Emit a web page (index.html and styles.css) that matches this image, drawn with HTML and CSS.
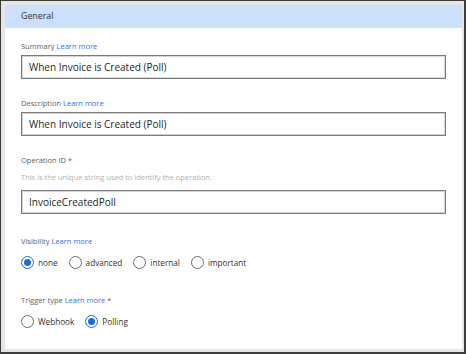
FILE: index.html
```html
<!DOCTYPE html>
<html lang="en">

<head>
    <meta charset="UTF-8">
    <title>General</title>
    <link rel="stylesheet" href="styles.css">
</head>

<body>
    <div class="frame">
        <div class="panel">
            <div class="panel-header">General</div>

            <div class="panel-body">
                <div class="field">
                    <div class="field-label">Summary <a class="learn">Learn more</a></div>
                    <div class="text-input">When Invoice is Created (Poll)</div>
                </div>

                <div class="field">
                    <div class="field-label">Description <a class="learn">Learn more</a></div>
                    <div class="text-input">When Invoice is Created (Poll)</div>
                </div>

                <div class="field">
                    <div class="field-label">Operation ID <span class="req">*</span></div>
                    <div class="hint">This is the unique string used to identify the operation.</div>
                    <div class="text-input">InvoiceCreatedPoll</div>
                </div>

                <div class="field field-choice">
                    <div class="field-label">Visibility <a class="learn">Learn more</a></div>
                    <div class="radio-row">
                        <span class="radio checked"></span><span class="radio-text">none</span>
                        <span class="radio"></span><span class="radio-text">advanced</span>
                        <span class="radio"></span><span class="radio-text">internal</span>
                        <span class="radio"></span><span class="radio-text">important</span>
                    </div>
                </div>

                <div class="field field-choice">
                    <div class="field-label">Trigger type <a class="learn">Learn more</a> <span class="req">*</span></div>
                    <div class="radio-row">
                        <span class="radio"></span><span class="radio-text">Webhook</span>
                        <span class="radio checked"></span><span class="radio-text">Polling</span>
                    </div>
                </div>
            </div>
        </div>
    </div>
</body>

</html>
```

FILE: styles.css
```css
html,
body {
    margin: 0;
    padding: 0;
}

body {
    font-family: "Open Sans", "Noto Sans", Arial, sans-serif;
    background-color: #fff;
}

.frame {
    box-sizing: border-box;
    width: 466px;
    height: 354px;
    border-left: 1px solid #3c3c3c;
    border-top: 1px solid #3c3c3c;
    border-right: 2px solid #3c3c3c;
    border-bottom: 2px solid #3c3c3c;
    background-color: #e6e6e6;
    padding: 4px 2px 3px 4px;
}

.panel {
    height: 100%;
    background-color: #fff;
}

.panel-header {
    height: 23px;
    line-height: 23px;
    padding-left: 16px;
    background-color: #cde0fb;
    color: #323130;
    font-size: 8.8px;
}

.panel-body {
    padding: 12px 16px 0 16px;
}

.field {
    margin-bottom: 18px;
}

.field-label {
    font-size: 7.5px;
    line-height: 12px;
    color: #605e5c;
    margin-bottom: 3px;
}

.learn {
    color: #2f72dc;
}

.req {
    color: #c4314b;
}

.hint {
    font-size: 7.5px;
    line-height: 12px;
    color: #b3b0ad;
    margin-top: 5px;
    margin-bottom: 7px;
}

.text-input {
    box-sizing: border-box;
    height: 24px;
    line-height: 22px;
    border: 1px solid #7a7a7a;
    box-shadow: inset 0 0 0 1px #d6d6d6;
    padding-left: 7px;
    font-size: 10px;
    color: #201f1e;
}

.field-choice {
    margin-bottom: 0;
    padding-top: 3px;
}

.field-choice .field-label {
    margin-bottom: 7px;
}

.field-choice + .field-choice {
    margin-top: 21px;
}

.radio-row {
    display: flex;
    align-items: center;
    height: 16px;
}

.radio {
    box-sizing: border-box;
    width: 13px;
    height: 13px;
    border: 1px solid #6b6b6b;
    border-radius: 50%;
    display: flex;
    align-items: center;
    justify-content: center;
}

.radio.checked {
    border-color: #1a6ae0;
}

.radio.checked::after {
    content: "";
    width: 7px;
    height: 7px;
    border-radius: 50%;
    background-color: #1a6ae0;
}

.radio-text {
    font-size: 8.2px;
    color: #323130;
    margin-left: 4px;
    margin-right: 11px;
}
```
